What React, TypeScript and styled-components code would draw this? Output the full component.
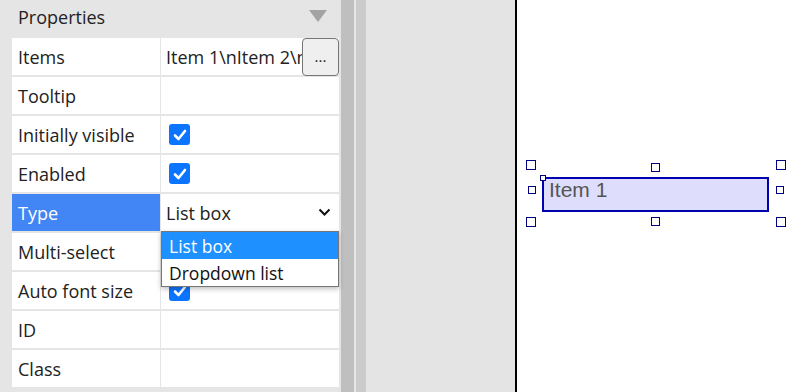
import React from "react";
import styled, {createGlobalStyle} from "styled-components";

const GlobalStyle = createGlobalStyle`
  html, body {
    margin: 0;
    padding: 0;
    width: 798px;
    height: 392px;
    overflow: hidden;
    background: #ffffff;
  }
  #root {
    height: 100%;
  }
`;

const Page = styled.div`
  display: flex;
  width: 798px;
  height: 392px;
  font-family: "Open Sans", "Noto Sans", sans-serif;
  font-size: 18px;
  color: #222;
`;

const Panel = styled.div`
  width: 341px;
  flex-shrink: 0;
  background: #e5e5e5;
  display: flex;
  flex-direction: column;
`;

const PanelHeader = styled.div`
  height: 38px;
  display: flex;
  align-items: center;
  justify-content: space-between;
  padding: 0 14px 4px 18px;
  box-sizing: border-box;
`;

const Collapse = styled.span`
  width: 0;
  height: 0;
  border-left: 9px solid transparent;
  border-right: 9px solid transparent;
  border-top: 12px solid #a3a3a3;
  margin-bottom: 2px;
`;

const Grid = styled.div`
  margin-left: 12px;
  width: 327px;
  display: grid;
  grid-template-columns: 148px 178px;
  grid-auto-rows: 37px;
  column-gap: 1px;
  row-gap: 2px;
`;

const Label = styled.div<{$active?: boolean}>`
  display: flex;
  align-items: center;
  padding-left: 6px;
  background: ${(p) => (p.$active ? "#4285f4" : "#ffffff")};
  color: ${(p) => (p.$active ? "#ffffff" : "#222")};
`;

const Value = styled.div`
  position: relative;
  display: flex;
  align-items: center;
  padding-left: 5px;
  background: #ffffff;
  white-space: nowrap;
  min-width: 0;
`;

const ClipText = styled.span`
  flex: 1;
  overflow: hidden;
  white-space: nowrap;
`;

const MoreButton = styled.button`
  width: 37px;
  height: 38px;
  align-self: flex-start;
  border: 1px solid #767676;
  border-radius: 4px;
  background: #efefef;
  font-family: inherit;
  font-size: 15px;
  color: #222;
  padding: 0 0 2px;
  flex-shrink: 0;
`;

const Check = styled.span`
  width: 21px;
  height: 21px;
  margin-left: 3px;
  border-radius: 3px;
  background: #0b75ff;
  display: flex;
  align-items: center;
  justify-content: center;
`;

const SelectText = styled.span`
  flex: 1;
`;

const Chevron = styled.svg`
  margin-right: 8px;
`;

const Options = styled.div`
  position: absolute;
  left: 0;
  top: 37px;
  width: 178px;
  box-sizing: border-box;
  border: 1px solid #767676;
  background: #ffffff;
  box-shadow: 0 2px 5px rgba(0, 0, 0, 0.25);
  z-index: 2;
`;

const Option = styled.div<{$selected?: boolean}>`
  height: 27px;
  display: flex;
  align-items: center;
  padding-left: 7px;
  font-size: 17.5px;
  background: ${(p) => (p.$selected ? "#1e90ff" : "#ffffff")};
  color: ${(p) => (p.$selected ? "#ffffff" : "#111")};
`;

const Scrollbar = styled.div`
  width: 13px;
  flex-shrink: 0;
  background: #bfbfbf;
`;

const Splitter = styled.div`
  width: 163px;
  flex-shrink: 0;
  box-sizing: border-box;
  display: flex;
  background: #e4e4e4;
  border-left: 2px solid #e5e5e5;
  border-right: 2px solid #000;
`;

const SplitterGrip = styled.div`
  width: 10px;
  background: #cbcbcb;
`;

const Canvas = styled.div`
  position: relative;
  flex: 1;
  background: #ffffff;
`;

const Widget = styled.div`
  position: absolute;
  left: 25px;
  top: 177px;
  width: 227px;
  height: 35px;
  box-sizing: border-box;
  border: 2px solid #0000b0;
  background: #dedefc;
  font-family: "Liberation Sans", Arial, sans-serif;
  font-size: 21px;
  color: #555;
  padding: 0 0 0 5px;
  line-height: 22px;
`;

const Handle = styled.span<{$size: number}>`
  position: absolute;
  width: ${(p) => p.$size}px;
  height: ${(p) => p.$size}px;
  box-sizing: border-box;
  border: 1px solid #000080;
  background: #ffffff;
`;

const rows: {label: string; kind: "text" | "check" | "select" | "empty"; text?: string}[] = [
  {label: "Items", kind: "text", text: "Item 1\\nItem 2\\nItem 3"},
  {label: "Tooltip", kind: "empty"},
  {label: "Initially visible", kind: "check"},
  {label: "Enabled", kind: "check"},
  {label: "Type", kind: "select", text: "List box"},
  {label: "Multi-select", kind: "empty"},
  {label: "Auto font size", kind: "check"},
  {label: "ID", kind: "empty"},
  {label: "Class", kind: "empty"},
];

// canvas offsets are relative to x=517
const handles = [
  {x: 9, y: 160, s: 10},
  {x: 134, y: 163, s: 9},
  {x: 259, y: 160, s: 10},
  {x: 11, y: 186, s: 8},
  {x: 259, y: 186, s: 8},
  {x: 9, y: 217, s: 10},
  {x: 134, y: 217, s: 9},
  {x: 259, y: 217, s: 10},
  {x: 23, y: 175, s: 6},
];

const Tick = () => (
  <svg width="14" height="12" viewBox="0 0 14 12">
    <polyline points="2,6.5 5.5,10 12,2" fill="none" stroke="#fff" strokeWidth="2.6" strokeLinecap="round" strokeLinejoin="round" />
  </svg>
);

export default function App() {
  return (
    <>
      <GlobalStyle />
      <Page>
        <Panel>
          <PanelHeader>
            Properties
            <Collapse />
          </PanelHeader>
          <Grid>
            {rows.map((row) => (
              <React.Fragment key={row.label}>
                <Label $active={row.kind === "select"}>{row.label}</Label>
                <Value>
                  {row.kind === "text" && (
                    <>
                      <ClipText>{row.text}</ClipText>
                      <MoreButton>...</MoreButton>
                    </>
                  )}
                  {row.kind === "check" && (
                    <Check>
                      <Tick />
                    </Check>
                  )}
                  {row.kind === "select" && (
                    <>
                      <SelectText>{row.text}</SelectText>
                      <Chevron width="13" height="9" viewBox="0 0 13 9">
                        <polyline points="1.5,1.5 6.5,6.5 11.5,1.5" fill="none" stroke="#111" strokeWidth="2" />
                      </Chevron>
                      <Options>
                        <Option $selected>List box</Option>
                        <Option>Dropdown list</Option>
                      </Options>
                    </>
                  )}
                </Value>
              </React.Fragment>
            ))}
          </Grid>
        </Panel>
        <Scrollbar />
        <Splitter>
          <SplitterGrip />
        </Splitter>
        <Canvas>
          <Widget>Item 1</Widget>
          {handles.map((h, i) => (
            <Handle key={i} $size={h.s} style={{left: h.x, top: h.y}} />
          ))}
        </Canvas>
      </Page>
    </>
  );
}
